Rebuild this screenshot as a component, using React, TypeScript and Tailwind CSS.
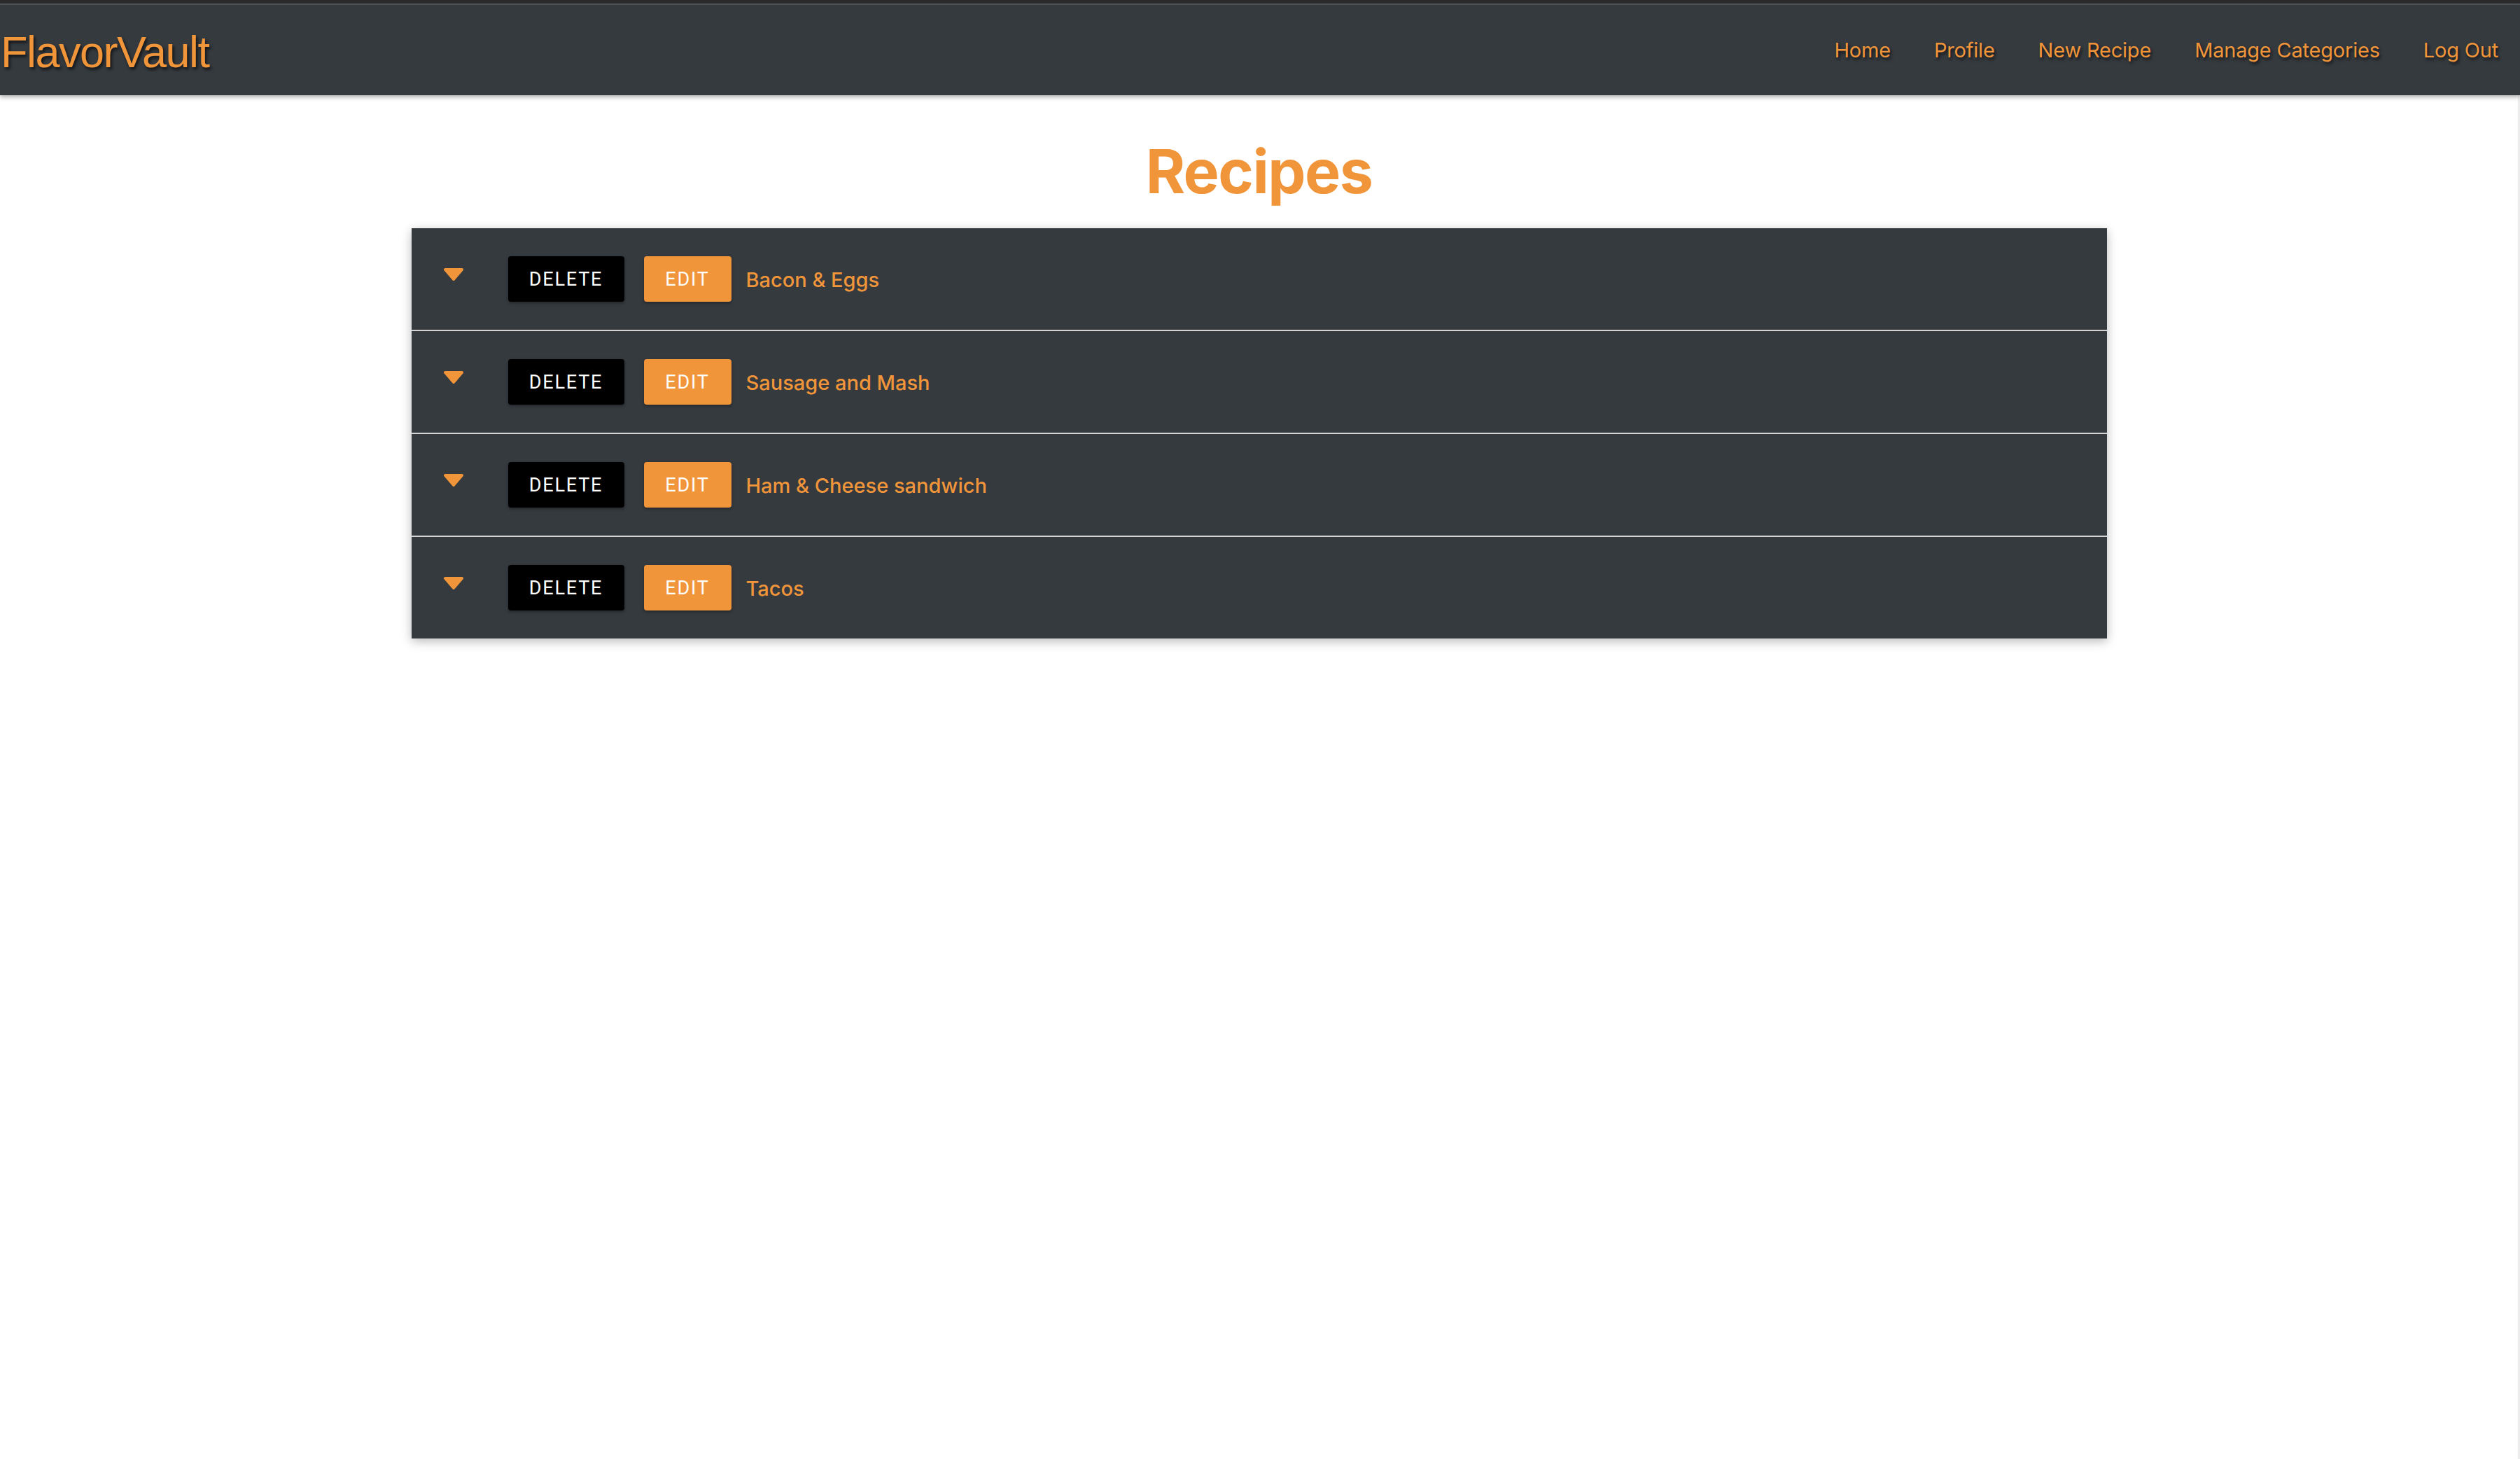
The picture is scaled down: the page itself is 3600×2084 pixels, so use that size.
import React from "react";

const recipes = ["Bacon & Eggs", "Sausage and Mash", "Ham & Cheese sandwich", "Tacos"];
const links = ["Home", "Profile", "New Recipe", "Manage Categories", "Log Out"];

function Caret() {
  return (
    <svg width="30" height="18" viewBox="0 0 30 18" className="mb-[14px] shrink-0">
      <polygon points="3,2 27,2 15,16" fill="#f0953a" stroke="#f0953a" strokeWidth="4" strokeLinejoin="round" />
    </svg>
  );
}

export default function App() {
  return (
    <div className="flex min-h-screen flex-col bg-white font-['Inter',sans-serif]">
      <div className="h-[5px] bg-[#2b2b2b]" />
      <div className="h-[2px] bg-[#555759]" />
      <nav className="relative z-10 flex h-[129px] items-center justify-between bg-[#353a3f] shadow-[0_3px_6px_rgba(0,0,0,0.3)]">
        <span className="pl-[1px] pt-[6px] font-['Liberation_Sans',Arial,sans-serif] text-[63px] leading-none tracking-[-1.5px] text-[#f0953a] [text-shadow:2px_3px_4px_rgba(0,0,0,0.7)]">
          FlavorVault
        </span>
        <ul className="flex items-center">
          {links.map((l) => (
            <li
              key={l}
              className="px-[31px] text-[29px] leading-none tracking-[-0.2px] text-[#f0953a] [text-shadow:2px_3px_4px_rgba(0,0,0,0.7)]"
            >
              {l}
            </li>
          ))}
        </ul>
      </nav>
      <main className="flex flex-1 flex-col items-center border-r-[3px] border-[#ececec]">
        <h1 className="mt-[66px] mb-[38px] text-[86px] font-bold leading-none tracking-[-1.5px] text-[#f0953a]">
          Recipes
        </h1>
        <div className="w-[2422px] bg-[#353a3f] shadow-[0_4px_14px_rgba(0,0,0,0.28)]">
          {recipes.map((r, i) => (
            <React.Fragment key={r}>
              {i > 0 && <div className="h-[2px] bg-[#d4d4d4]" />}
              <div className="flex h-[145px] items-center pl-[45px]">
                <Caret />
                <button className="ml-[63px] flex h-[65px] w-[166px] items-center justify-center rounded-[4px] bg-black pt-[2px] font-['Roboto',sans-serif] text-[27px] font-normal tracking-[1.8px] text-white shadow-[0_2px_4px_rgba(0,0,0,0.35)]">
                  DELETE
                </button>
                <button className="ml-[28px] flex h-[65px] w-[125px] items-center justify-center rounded-[4px] bg-[#f0953a] pt-[2px] font-['Roboto',sans-serif] text-[27px] font-normal tracking-[1.8px] text-white shadow-[0_2px_4px_rgba(0,0,0,0.35)]">
                  EDIT
                </button>
                <span className="ml-[21px] pt-[2px] text-[29px] font-medium text-[#f0953a]">{r}</span>
              </div>
            </React.Fragment>
          ))}
        </div>
      </main>
    </div>
  );
}
